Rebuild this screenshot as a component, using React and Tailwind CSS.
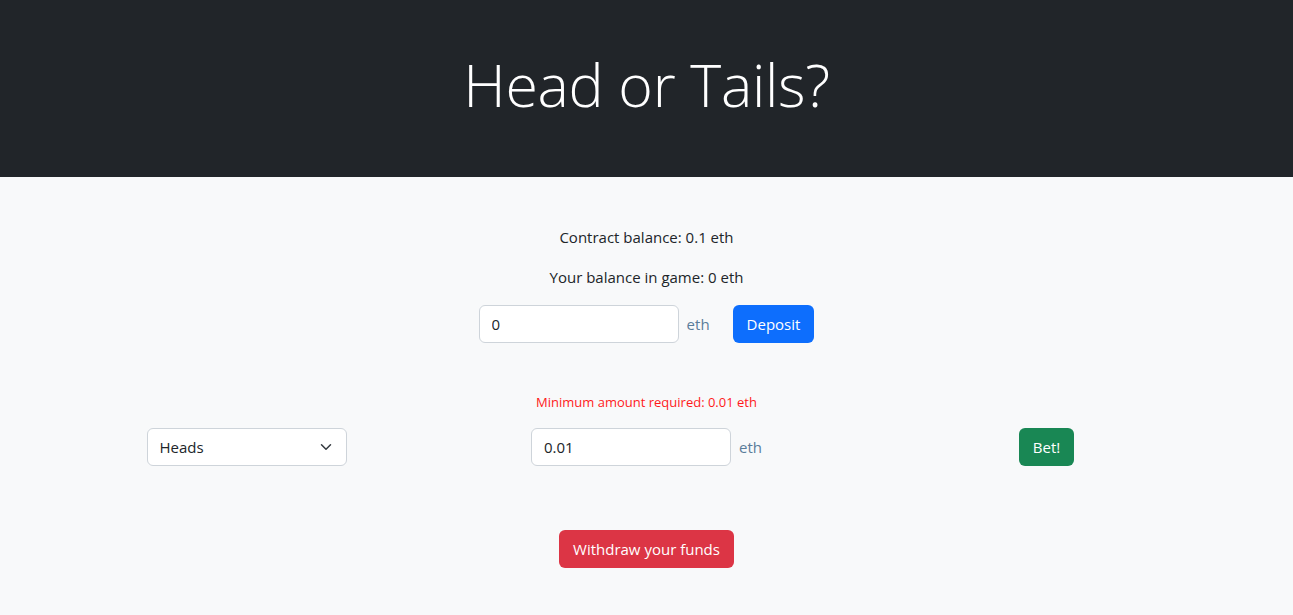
import React from "react";

const Chevron = () => (
    <svg width="16" height="12" viewBox="0 0 16 16" fill="none" stroke="#343a40" strokeWidth="2" strokeLinecap="round" strokeLinejoin="round">
        <path d="m2 5 6 6 6-6" />
    </svg>
);

export default function App() {
    return <div className="min-h-[615px] bg-[#f8f9fa] text-[#212529] font-['Open_Sans',sans-serif]">
        <header className="h-[177px] bg-[#212529] flex items-center justify-center">
            <h1 className="text-[59px] font-light text-white leading-none pb-[8px] tracking-[-0.3px]">Head or Tails?</h1>
        </header>

        <main className="flex flex-col items-center">
            <p className="mt-[48px] text-[15px] leading-[24px]">Contract balance: 0.1 eth</p>
            <p className="mt-[16px] text-[15px] leading-[24px]">Your balance in game: 0 eth</p>

            <div className="mt-[16px] flex items-center">
                <input
                    defaultValue="0"
                    className="w-[200px] h-[38px] px-[12px] bg-white border border-[#ced4da] rounded-[6px] text-[15px] outline-none"
                />
                <span className="ml-[8px] text-[15px] text-[#5b7d9a]">eth</span>
                <button className="ml-[23px] h-[38px] px-[14px] rounded-[6px] bg-[#0d6efd] text-white text-[15px]">Deposit</button>
            </div>

            <p className="mt-[49px] text-[13px] leading-[20px] text-[#ff1a1a]">Minimum amount required: 0.01 eth</p>

            <div className="mt-[16px] grid grid-cols-[400px_400px_400px] items-center">
                <div className="flex justify-center">
                    <div className="w-[200px] h-[38px] px-[12px] bg-white border border-[#ced4da] rounded-[6px] flex items-center justify-between text-[15px]">
                        <span>Heads</span>
                        <Chevron />
                    </div>
                </div>
                <div className="flex justify-center items-center">
                    <input
                        defaultValue="0.01"
                        className="w-[200px] h-[38px] px-[12px] bg-white border border-[#ced4da] rounded-[6px] text-[15px] outline-none"
                    />
                    <span className="ml-[8px] text-[15px] text-[#5b7d9a]">eth</span>
                </div>
                <div className="flex justify-center">
                    <button className="h-[38px] px-[14px] rounded-[6px] bg-[#198754] text-white text-[15px]">Bet!</button>
                </div>
            </div>

            <button className="mt-[64px] h-[38px] px-[14px] rounded-[6px] bg-[#dc3545] text-white text-[15px]">Withdraw your funds</button>
        </main>
    </div>
}
